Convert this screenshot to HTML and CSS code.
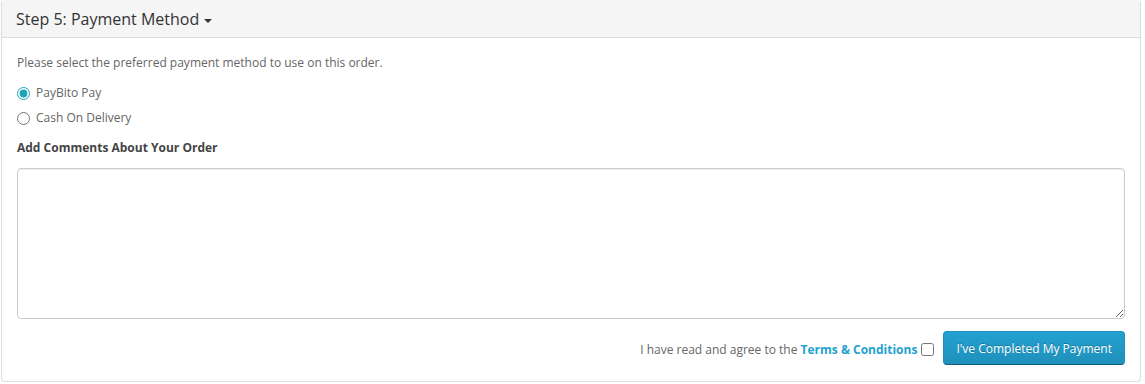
FILE: index.html
```html
<!DOCTYPE html>
<html>
<head>
    <title>Checkout - Payment Method</title>
    <meta name="viewport" content="width=device-width, initial-scale=1">
    <link rel="stylesheet" href="styles.css">
</head>
<body>
    <div class="panel">
        <div class="panel-heading">
            <h4 class="panel-title">Step 5: Payment Method <span class="caret"></span></h4>
        </div>
        <div class="panel-body">
            <p>Please select the preferred payment method to use on this order.</p>
            <div class="radio">
                <label><input type="radio" name="payment_method" value="paybito" checked> PayBito Pay</label>
            </div>
            <div class="radio">
                <label><input type="radio" name="payment_method" value="cod"> Cash On Delivery</label>
            </div>
            <p class="comment-title"><strong>Add Comments About Your Order</strong></p>
            <textarea name="comment" rows="8" class="form-control"></textarea>
            <div class="buttons">
                <span class="agree">I have read and agree to the <a href="#" class="agree-link"><b>Terms &amp; Conditions</b></a></span>
                <input type="checkbox" name="agree" value="1">
                <button type="button" class="btn-primary">I've Completed My Payment</button>
            </div>
        </div>
    </div>
</body>
</html>
```

FILE: styles.css
```css
body {
    margin: 0;
    font-family: "Open Sans", sans-serif;
    font-size: 12px;
    line-height: 20px;
    color: #666;
    background: #fff;
}
.panel {
    margin: -1px 0 0 1px;
    width: 1140px;
    box-sizing: border-box;
    border: 1px solid #ddd;
    border-radius: 4px;
    box-shadow: 0 1px 1px rgba(0,0,0,0.05);
}
.panel-heading {
    background: #f5f5f5;
    border-bottom: 1px solid #ddd;
    padding: 10px 15px 9px 14px;
    color: #333;
}
.panel-title {
    margin: 0;
    font-size: 16px;
    font-weight: normal;
    line-height: 18px;
}
.caret {
    display: inline-block;
    width: 0;
    height: 0;
    margin-left: 1px;
    vertical-align: middle;
    border-top: 4px solid #333;
    border-left: 4px solid transparent;
    border-right: 4px solid transparent;
}
.panel-body {
    padding: 15px 15px 16px;
}
p {
    margin: 0 0 10px;
}
.radio {
    margin: 0 0 5px;
}
.radio label {
    display: flex;
    align-items: center;
    gap: 6px;
    cursor: pointer;
}
.radio input {
    margin: 0;
    width: 13px;
    height: 13px;
    accent-color: #1fa3b6;
}
.comment-title {
    margin-top: 10px;
    color: #444;
}
.form-control {
    display: block;
    width: 100%;
    height: 151px;
    box-sizing: border-box;
    border: 1px solid #ccc;
    border-radius: 4px;
    box-shadow: inset 0 1px 1px rgba(0,0,0,0.075);
    padding: 6px 12px;
    font-family: inherit;
    font-size: 12px;
    margin: 0;
}
.buttons {
    display: flex;
    justify-content: flex-end;
    align-items: center;
    margin-top: 12px;
}
.agree {
    line-height: 20px;
    margin-top: 4px;
}
.agree-link {
    color: #23a1d1;
    text-decoration: none;
}
.buttons input[type="checkbox"] {
    margin: 3px 9px 0 4px;
    width: 13px;
    height: 13px;
}
.btn-primary {
    height: 34px;
    padding: 0 12px;
    font-family: inherit;
    font-size: 12px;
    color: #fff;
    background-color: #229ac8;
    background-image: linear-gradient(to bottom, #23a1d1, #1f90bb);
    border: 1px solid #1f90bb;
    border-bottom-color: #145e7a;
    border-radius: 4px;
    text-shadow: 0 -1px 0 rgba(0,0,0,0.25);
    cursor: pointer;
}
```
